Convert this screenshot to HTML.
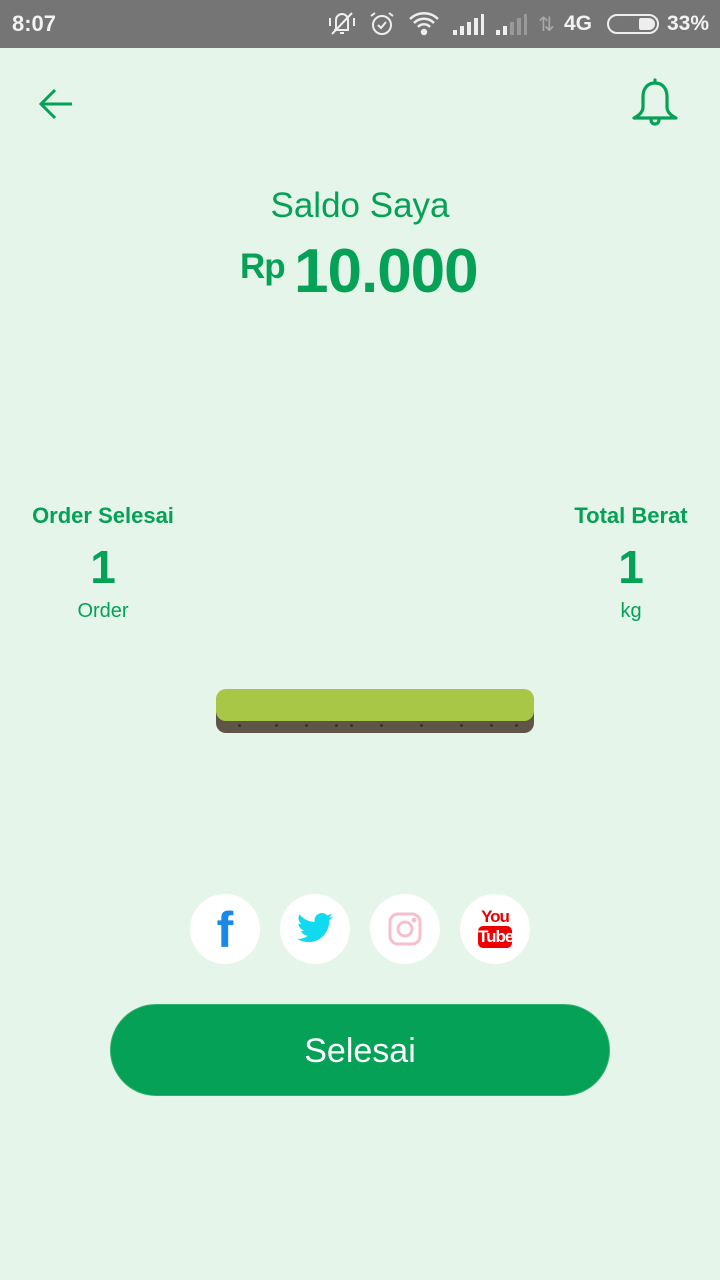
<!DOCTYPE html>
<html><head><meta charset="utf-8"><style>
*{margin:0;padding:0;box-sizing:border-box}
body{width:720px;height:1280px;background:#e6f5e9;font-family:"Liberation Sans",sans-serif;position:relative;overflow:hidden;color:#05a157}
.sb{position:absolute;top:0;left:0;width:720px;height:48px;background:#757575;color:#f2f2f2}
.abs{position:absolute}
.c{text-align:center}
.d{position:absolute;width:3px;height:3px;border-radius:50%;background:#3a322a;top:724px}
</style></head><body>
<div class="sb">
 <div class="abs" style="left:12px;top:11px;font-size:22px;font-weight:bold">8:07</div>
 <svg class="abs" style="left:326px;top:10px" width="32" height="28" viewBox="0 0 32 28" fill="none" stroke="#eee" stroke-width="2"><path d="M10 20V10a6 6 0 0 1 12 0v10H8M14 23h4M4 8v8M28 8v8M6 24L26 3"/></svg>
 <svg class="abs" style="left:368px;top:10px" width="28" height="28" viewBox="0 0 28 28" fill="none" stroke="#eee" stroke-width="2"><circle cx="14" cy="15" r="9"/><path d="M10 15l3 3 5-6M3 6l4-3M25 6l-4-3"/></svg>
 <svg class="abs" style="left:408px;top:10px" width="34" height="28" viewBox="0 0 34 28" fill="none" stroke="#eee" stroke-width="2.5"><path d="M2 9a20 20 0 0 1 28 0M6 13a14 14 0 0 1 20 0M10 17a8 8 0 0 1 12 0"/><circle cx="16" cy="22" r="2" fill="#eee"/></svg>
 <svg class="abs" style="left:453px;top:14px" width="32" height="22" viewBox="0 0 32 22" fill="#eee"><rect x="0" y="16" width="4" height="5"/><rect x="7" y="12" width="4" height="9"/><rect x="14" y="8" width="4" height="13"/><rect x="21" y="4" width="4" height="17"/><rect x="28" y="0" width="3" height="21"/></svg>
 <svg class="abs" style="left:496px;top:14px" width="32" height="22" viewBox="0 0 32 22"><rect x="0" y="16" width="4" height="5" fill="#eee"/><rect x="7" y="12" width="4" height="9" fill="#eee"/><rect x="14" y="8" width="4" height="13" fill="#999"/><rect x="21" y="4" width="4" height="17" fill="#999"/><rect x="28" y="0" width="3" height="21" fill="#999"/></svg>
 <div class="abs" style="left:538px;top:12px;font-size:20px;color:#aaa">⇅</div>
 <div class="abs" style="left:564px;top:12px;font-size:21px;font-weight:bold">4G</div>
 <div class="abs" style="left:607px;top:14px;width:52px;height:20px;border:2px solid #eee;border-radius:10px"><div class="abs" style="right:2px;top:2px;width:16px;height:12px;background:#eee;border-radius:2px 6px 6px 2px"></div></div>
 <div class="abs" style="left:667px;top:12px;font-size:21px;font-weight:bold">33%</div>
</div>
<svg class="abs" style="left:38px;top:86px" width="36" height="36" viewBox="0 0 36 36" fill="none" stroke="#05a157" stroke-width="3"><path d="M34 18H4M17 4L3 18l14 14"/></svg>
<svg class="abs" style="left:628px;top:76px" width="54" height="54" viewBox="0 0 54 54" fill="none" stroke="#05a157" stroke-width="3.2" stroke-linejoin="round" stroke-linecap="round"><path d="M27 4v3M27 7c-8 0-12 6-12 14v10c0 4-3 8-9 11h42c-6-3-9-7-9-11V21c0-8-4-14-12-14z"/><path d="M23 44a4 4 0 0 0 8 0"/></svg>
<div class="abs c" style="left:0;width:720px;top:186px;font-size:35px">Saldo Saya</div>
<div class="abs" style="left:240px;top:247px;font-size:35px;font-weight:bold;letter-spacing:-1px">Rp</div>
<div class="abs" style="left:294px;top:236px;font-size:62px;font-weight:bold;letter-spacing:-1px">10.000</div>
<div class="abs c" style="left:20px;width:166px;top:503px;font-size:22px;font-weight:bold">Order Selesai</div>
<div class="abs c" style="left:20px;width:166px;top:540px;font-size:46px;font-weight:bold">1</div>
<div class="abs c" style="left:20px;width:166px;top:600px;font-size:20px">Order</div>
<div class="abs c" style="left:560px;width:142px;top:503px;font-size:22px;font-weight:bold">Total Berat</div>
<div class="abs c" style="left:560px;width:142px;top:540px;font-size:46px;font-weight:bold">1</div>
<div class="abs c" style="left:560px;width:142px;top:600px;font-size:20px">kg</div>
<div class="abs" style="left:216px;top:690px;width:318px;height:43px;background:#5e5548;border-radius:10px"></div>
<div class="abs" style="left:216px;top:689px;width:318px;height:32px;background:#a9c746;border-radius:10px"></div>
<div class="d" style="left:238px"></div><div class="d" style="left:275px"></div><div class="d" style="left:305px"></div><div class="d" style="left:335px"></div><div class="d" style="left:350px"></div><div class="d" style="left:380px"></div><div class="d" style="left:420px"></div><div class="d" style="left:460px"></div><div class="d" style="left:490px"></div><div class="d" style="left:515px"></div>
<div class="abs" style="left:190px;top:894px;width:70px;height:70px;background:#fff;border-radius:50%"></div>
<div class="abs c" style="left:190px;top:900px;width:70px;font-size:50px;font-weight:bold;color:#1b87e6;line-height:60px">f</div>
<div class="abs" style="left:280px;top:894px;width:70px;height:70px;background:#fff;border-radius:50%"></div>
<svg class="abs" style="left:297px;top:912px" width="36" height="32" viewBox="0 0 24 20"><path fill="#11d9f0" d="M24 2.3a9.8 9.8 0 0 1-2.8.8A4.9 4.9 0 0 0 23.3.4a9.9 9.9 0 0 1-3.1 1.2A4.9 4.9 0 0 0 11.8 6 14 14 0 0 1 1.7.9a4.9 4.9 0 0 0 1.5 6.6A4.9 4.9 0 0 1 1 6.9a4.9 4.9 0 0 0 3.9 4.8 4.9 4.9 0 0 1-2.2.1 4.9 4.9 0 0 0 4.6 3.4A9.9 9.9 0 0 1 0 17.2 14 14 0 0 0 7.5 19.4c9.1 0 14-7.5 14-14v-.6A10 10 0 0 0 24 2.3z"/></svg>
<div class="abs" style="left:370px;top:894px;width:70px;height:70px;background:#fff;border-radius:50%"></div>
<svg class="abs" style="left:388px;top:912px" width="34" height="34" viewBox="0 0 34 34" fill="none" stroke="#f7bfcc" stroke-width="3"><rect x="2" y="2" width="30" height="30" rx="8"/><circle cx="17" cy="17" r="7"/><circle cx="26" cy="8" r="1" fill="#f7bfcc"/></svg>
<div class="abs" style="left:460px;top:894px;width:70px;height:70px;background:#fff;border-radius:50%"></div>
<div class="abs c" style="left:460px;top:907px;width:70px;font-size:17px;font-weight:bold;color:#e00;letter-spacing:-1px">You</div>
<div class="abs c" style="left:478px;top:926px;width:34px;height:22px;background:#e00;border-radius:5px;color:#fff;font-size:17px;font-weight:bold;letter-spacing:-1px;line-height:22px">Tube</div>
<div class="abs c" style="left:110px;top:1004px;width:500px;height:92px;background:#05a157;border-radius:46px;color:#fff;font-size:34px;line-height:92px;border:1px solid #2fb06a">Selesai</div>
</body></html>
